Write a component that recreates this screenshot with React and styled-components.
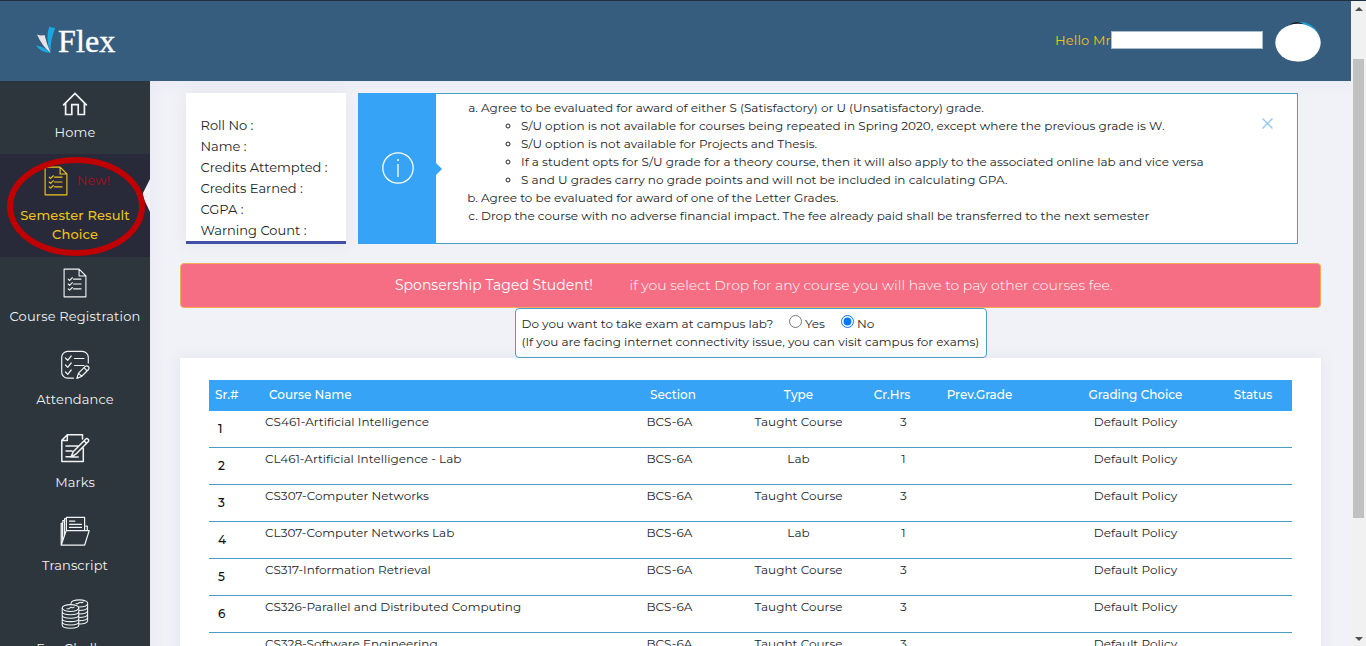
import React from "react";
import styled, { createGlobalStyle } from "styled-components";

const Global = createGlobalStyle`
  * { box-sizing: border-box; }
  html, body { margin: 0; height: 646px; overflow: hidden; }
  body { font-family: Montserrat, Inter, "Liberation Sans", sans-serif; color: #212529; }
`;

const T = styled.span`
  letter-spacing: ${(p) => (p.$ls ? `${p.$ls}px` : "inherit")};
  white-space: nowrap;
`;

const Page = styled.div`
  display: flex;
  width: 1366px;
  height: 646px;
  overflow: hidden;
  border-top: 1px solid #1f2f3f;
  background: #f0f2f7;
`;
const Shell = styled.div`
  width: 1351px;
  display: flex;
  flex-direction: column;
`;
const Header = styled.header`
  height: 80px;
  flex: none;
  background: #365d7e;
  display: flex;
  align-items: center;
  justify-content: space-between;
  padding: 0 30px 0 35px;
  position: relative;
  z-index: 2;
`;
const Logo = styled.div`
  display: flex;
  align-items: center;
  color: #fff;
  font: 32px/36px "Liberation Serif", serif;
  -webkit-text-stroke: 0.4px #fff;
  margin-top: -1px;
  svg { margin: -2px 3px 0 0; }
`;
const User = styled.div`
  display: flex;
  align-items: center;
  font-size: 13px;
  color: #f2c314;
  > span { margin-top: -2px; }
`;
const NameField = styled.div`
  width: 152px;
  height: 18px;
  margin: -2px 12px 0 0;
  background: #fff;
  border: 1px solid #a9bccb;
`;
const Avatar = styled.div`
  width: 46px;
  height: 40px;
  margin-top: 2px;
`;
const Columns = styled.div`
  flex: 1;
  display: flex;
  min-height: 0;
`;
const Sidebar = styled.nav`
  width: 150px;
  flex: none;
  background: #2c363c;
  overflow: hidden;
  position: relative;
`;
const NavItem = styled.div`
  height: ${(p) => p.$h || 83}px;
  padding-top: ${(p) => p.$pt || 10}px;
  display: flex;
  flex-direction: column;
  align-items: center;
  text-align: center;
  font-size: 13px;
  line-height: 19px;
  font-weight: ${(p) => (p.$active ? 500 : 400)};
  color: ${(p) => (p.$active ? "#eec31c" : "#f1f3f4")};
  background: ${(p) => (p.$active ? "#282939" : "transparent")};
  position: relative;
`;
const IconSlot = styled.div`
  height: ${(p) => p.$h || 40}px;
  display: flex;
  align-items: flex-start;
  padding-left: ${(p) => p.$l || 0}px;
`;
const NewTag = styled.span`
  color: #a3121f;
  font-weight: 400;
  margin: 5px 0 0 9px;
`;
const Notch = styled.svg`
  position: absolute;
  right: 0;
  top: 25px;
`;
const Ring = styled.div`
  position: absolute;
  left: 7px;
  top: 76px;
  width: 138px;
  height: 99px;
  border: 6px solid #c00000;
  border-radius: 50%;
`;
const Main = styled.main`
  flex: 1;
  padding: 12px 30px 0;
  display: flex;
  flex-direction: column;
  box-shadow: inset 8px 8px 16px -6px rgba(110, 90, 200, 0.06);
`;
const TopRow = styled.div`
  display: flex;
  gap: 12px;
  padding-left: 6px;
  height: 151px;
`;
const StudentCard = styled.div`
  width: 160px;
  background: #fff;
  border-bottom: 3px solid #414fa6;
  padding: 22px 0 0 14.5px;
  font-size: 13px;
  line-height: 21px;
  color: #212529;
  box-shadow: 0 1px 15px 1px rgba(69, 65, 78, 0.06);
`;
const Line = styled.div`
  white-space: nowrap;
`;
const Notice = styled.div`
  width: 940px;
  display: flex;
  background: #fff;
  border: 1px solid #4a9fc4;
  border-left: 0;
`;
const NoticeIcon = styled.div`
  width: 78px;
  margin: -1px 0;
  background: #36a3f7;
  display: flex;
  align-items: center;
  justify-content: center;
  position: relative;
  svg { margin: -1px 0 0 1px; }
  &::after {
    content: "";
    position: absolute;
    left: 78px;
    top: 70px;
    border: 6px solid transparent;
    border-left-color: #36a3f7;
    border-right: 0;
  }
`;
const NoticeBody = styled.div`
  flex: 1;
  padding-top: 5px;
  font-size: 12px;
  letter-spacing: 0.012px;
  line-height: 18px;
  ol { margin: 0; padding-left: 45px; }
  ul { margin: 0; padding-left: 40px; }
`;
const Close = styled.div`
  padding: 20px 24px 0 0;
`;
const PinkBar = styled.div`
  height: 45px;
  margin-top: 19px;
  flex: none;
  width: 1141px;
  background: #f66e84;
  border: 1px solid #f3ac58;
  border-radius: 4px;
  padding: 0 0 2px 214px;
  display: flex;
  align-items: center;
`;
const Strong = styled(T)`
  width: 234.5px;
  font-size: 14px;
  color: #fff;
`;
const Soft = styled(T)`
  font-size: 14px;
  font-weight: 300;
  color: #fff;
`;
const Exam = styled.div`
  align-self: flex-start;
  margin-left: 335px;
  width: 472px;
  height: 50px;
  flex: none;
  border: 1px solid #4a9fd0;
  border-radius: 4px;
  background: #fff;
  padding: 6px 0 0 5.5px;
  font-size: 12px;
  letter-spacing: 0.01px;
  line-height: 18px;
`;
const Question = styled.div`
  display: flex;
  height: 18px;
  input { margin: 0 3px 0 0; width: 13px; height: 13px; }
`;
const Option = styled.label`
  display: flex;
  margin-left: ${(p) => p.$gap}px;
`;
const Panel = styled.section`
  width: 1141px;
  flex: 1;
  background: #fff;
  padding: 22px 29px 0;
  box-shadow: 0 1px 15px 1px rgba(90, 80, 160, 0.08);
`;
const grid = `
  display: grid;
  grid-template-columns: 56px 354px 101px 157px 30px 145px 167px 68px;
`;
const HeadRow = styled.div`
  ${grid}
  height: 31px;
  line-height: 30px;
  background: #36a3f7;
  color: #fff;
  font-size: 12px;
  font-weight: 500;
  > * { text-align: center; }
  > :nth-child(-n + 2) { text-align: left; }
`;
const Row = styled.div`
  ${grid}
  height: 37px;
  border-bottom: 1px solid #4a9bc8;
  font-size: 12px;
  letter-spacing: 0.03px;
  line-height: 21px;
  > * { text-align: center; }
  > :nth-child(-n + 2) { text-align: left; }
`;
const Cell = styled.div`
  padding-left: ${(p) => p.$l || 0}px;
  white-space: nowrap;
`;
const Num = styled(Cell)`
  color: #111;
  font-weight: 500;
  padding: 7px 0 0 9px;
`;
const Centered = styled(Cell)`
  display: flex;
  justify-content: center;
`;
const Scroll = styled.div`
  width: 15px;
  background: #f1f1f1;
  display: flex;
  flex-direction: column;
  align-items: center;
  padding: 6px 0 5px;
`;
const Thumb = styled.div`
  width: 11px;
  height: 459px;
  margin: 48px 0 auto;
  background: #c1c1c1;
`;
const Arrow = styled.div`
  border: 4px solid transparent;
  ${(p) => (p.$up ? "border-bottom-color:#505050;border-top:0;" : "border-top-color:#505050;border-bottom:0;")}
`;

const Svg = ({ w = 30, h = 30, sw = 1.2, children, vb }) => (
  <svg width={w} height={h} viewBox={vb || `0 0 ${w} ${h}`} fill="none" stroke="currentColor" strokeWidth={sw} strokeLinejoin="round" strokeLinecap="round">
    {children}
  </svg>
);
const HomeIcon = () => (
  <Svg w={26} h={25} sw={1.7}>
    <path d="M1.6 12.8 13 1.4l11.4 11.400M3.600 11.300v11.200h6.200V12.600h6.400v9.900h6.200V11.300" strokeLinejoin="miter" />
  </Svg>
);
const ListIcon = () => (
  <Svg w={24} h={30} sw={1.15} vb="-.3 -.4 24.600 30.800">
    <path d="M.8.8h15.4l7 7v21.4H.8zM16.2.8v7h7M10.500 11h7.700M10.500 16h7.700M10.500 21h7.700M5 11l1.500 1.400L9.300 9.600M5 16l1.500 1.400 2.800-2.800M5 21l1.500 1.400 2.800-2.800" />
  </Svg>
);
const AttendIcon = () => (
  <Svg>
    <path d="M28.3 13V7.4a6 6 0 0 0-6-6H7.700a6 6 0 0 0-6 6v14.800a6 6 0 0 0 6 6h5.800M14.500 8.500h9.500M14.500 15.500h9.500M5.500 8l2.200 2.300L11.200 6M5.500 15l2.200 2.300 3.500-4.300M5.500 22l2.200 2.300 3.500-4.300M16.800 28.400l1.700-5.200 7-7q1.500-1 2.800.3t.2 3l-7 7zM18.500 23.200l3.200 3.200M24 17.700l3.100 3.100" />
  </Svg>
);
const MarksIcon = () => (
  <Svg sw={1.5}>
    <path d="M22.500 6V1.800H7.300L1.800 7.400v21.100h21.500v-13.500M7.300 1.800V7.400H1.800M6 13h12M6 18h6M6 23.700h5M11 24l2.200-5.300L25.800 6q1.200-.9 2.300.2t.2 2.300L15.800 21.200zM24 7.800l2.600 2.600M12.200 24h6" />
  </Svg>
);
const FolderIcon = () => (
  <Svg sw={1.2}>
    <path d="M1.200 29.200 6.200 14.600h23L24.600 29.200zM1.200 29V7.300h1.300V24M2.800 6.500V4.500h1.600V20M4.600 4V2.500h1.700V15M6.400 14.300V1.300h18.200v13.100M9.500 5.200h5.300M9.500 8.300h12M9.500 11.400h12M26 10.200h1.300v4" />
  </Svg>
);
const CoinsIcon = () => (
  <Svg sw={1.05}>
    <ellipse cx="10.5" cy="9" rx="8.3" ry="3.4" />
    <path d="M2.200 9v17c0 4.300 16.600 4.300 16.600 0V9M2.200 12.500c0 4.300 16.600 4.300 16.600 0M2.200 16c0 4.300 16.600 4.300 16.600 0M2.200 19.400c0 4.300 16.600 4.300 16.600 0M2.200 22.800c0 4.300 16.600 4.300 16.600 0M11 5.400V4c1-4.200 16.600-4.200 16.600 0v17.800c0 2.200-4 3.400-8.400 3.200M19 8c4 0 8.600-1 8.600-3.500M19 11.500c4 0 8.600-1 8.600-3.500M19 15c4 0 8.600-1 8.600-3.500M19 18.400c4 0 8.600-1 8.600-3.500M19 21.800c4 0 8.600-1 8.600-3.500M7 9.600c2 1.500 3-1.800 4.500-1.200s1.700.8 2.700-.4M16 4.500c2 1.500 3-1.800 4.500-1.200s1.700.8 2.700-.4" />
  </Svg>
);

const courses = [
  ["CS461-Artificial Intelligence", "Taught Course", 3],
  ["CL461-Artificial Intelligence - Lab", "Lab", 1],
  ["CS307-Computer Networks", "Taught Course", 3],
  ["CL307-Computer Networks Lab", "Lab", 1],
  ["CS317-Information Retrieval", "Taught Course", 3],
  ["CS326-Parallel and Distributed Computing", "Taught Course", 3],
  ["CS328-Software Engineering", "Taught Course", 3],
];

export default function App() {
  return (
    <Page>
      <Global />
      <Shell>
        <Header>
          <Logo>
            <svg width="20" height="28" viewBox="0 0 20 28">
              <path d="M14.3 0.500Q16.800 1.800 20.500 1.800Q15.500 12 15.500 27Q10 12 14.300 0.500Z" fill="#1ba6e0" />
              <path d="M2 8.500Q5.500 10 9.500 9Q11.500 17 15.500 27Q7 20 2 8.500Z" fill="#e6e3e8" />
              <path d="M1 19.500Q9 20 15.500 27Q5 26 1 19.500Z" fill="#1ba6e0" />
            </svg>
            <T $ls={0.1}>Flex</T>
          </Logo>
          <User>
            <T $ls={0.18}>Hello Mr</T>
            <NameField />
            <Avatar>
              <svg width="46" height="40" viewBox="0 0 46 40">
                <ellipse cx="25.500" cy="19.500" rx="19.500" ry="19.500" fill="#1b9dd0" />
                <ellipse cx="22" cy="20" rx="14" ry="20" fill="#101820" />
                <ellipse cx="23" cy="20.800" rx="22.700" ry="19" fill="#fff" />
              </svg>
            </Avatar>
          </User>
        </Header>
        <Columns>
          <Sidebar>
            <NavItem $h={73} $pt={11}>
              <IconSlot $h={31}><HomeIcon /></IconSlot>
              <T $ls={0.12}>Home</T>
            </NavItem>
            <NavItem $h={103} $pt={12} $active>
              <IconSlot $l={4}>
                <ListIcon />
                <NewTag><T $ls={0.12}>New!</T></NewTag>
              </IconSlot>
              <T $ls={0.12}>Semester Result</T>
              <T $ls={0.1}>Choice</T>
              <Notch width="8" height="34" viewBox="0 0 8 34"><path d="M8 0 1 14Q.5 16 1 18L8 33Z" fill="#f0f2f7" /></Notch>
            </NavItem>
            <NavItem $pt={11}><IconSlot $h={39}><ListIcon /></IconSlot><T $ls={0.16}>Course Registration</T></NavItem>
            <NavItem><IconSlot><AttendIcon /></IconSlot><T $ls={0.12}>Attendance</T></NavItem>
            <NavItem><IconSlot><MarksIcon /></IconSlot><T $ls={0.12}>Marks</T></NavItem>
            <NavItem><IconSlot><FolderIcon /></IconSlot><T $ls={0.12}>Transcript</T></NavItem>
            <NavItem><IconSlot><CoinsIcon /></IconSlot><T $ls={0.12}>Fee Challan</T></NavItem>
            <Ring />
          </Sidebar>
          <Main>
            <TopRow>
              <StudentCard>
                {["Roll No :", "Name :", "Credits Attempted :", "Credits Earned :", "CGPA :", "Warning Count :"].map((t) => (
                  <Line key={t}><T>{t}</T></Line>
                ))}
              </StudentCard>
              <Notice>
                <NoticeIcon>
                  <svg width="34" height="34" viewBox="0 0 34 34" fill="none" stroke="#fff" strokeWidth="1.3">
                    <circle cx="17" cy="17" r="15.200" />
                    <path d="M17 13v13" />
                    <circle cx="17" cy="9" r="1" fill="#fff" stroke="none" />
                  </svg>
                </NoticeIcon>
                <NoticeBody>
                  <ol type="a">
                    <li>
                      <T>Agree to be evaluated for award of either S (Satisfactory) or U (Unsatisfactory) grade.</T>
                      <ul type="circle">
                        <li><T>S/U option is not available for courses being repeated in Spring 2020, except where the previous grade is W.</T></li>
                        <li><T>S/U option is not available for Projects and Thesis.</T></li>
                        <li><T>If a student opts for S/U grade for a theory course, then it will also apply to the associated online lab and vice versa</T></li>
                        <li><T>S and U grades carry no grade points and will not be included in calculating GPA.</T></li>
                      </ul>
                    </li>
                    <li><T>Agree to be evaluated for award of one of the Letter Grades.</T></li>
                    <li><T>Drop the course with no adverse financial impact. The fee already paid shall be transferred to the next semester</T></li>
                  </ol>
                </NoticeBody>
                <Close>
                  <svg width="11" height="11" viewBox="0 0 11 11" stroke="#93c9f3" strokeWidth="1.4"><path d="M.5.5l10 10M10.500.5l-10 10" /></svg>
                </Close>
              </Notice>
            </TopRow>
            <PinkBar>
              <Strong>Sponsership Taged Student!</Strong>
              <Soft>if you select Drop for any course you will have to pay other courses fee.</Soft>
            </PinkBar>
            <Exam>
              <Question>
                <T>Do you want to take exam at campus lab?</T>
                <Option $gap={15.5}><input type="radio" name="lab" /><T>Yes</T></Option>
                <Option $gap={16}><input type="radio" name="lab" defaultChecked /><T>No</T></Option>
              </Question>
              <T>(If you are facing internet connectivity issue, you can visit campus for exams)</T>
            </Exam>
            <Panel>
              <HeadRow>
                <Cell $l={6}>Sr.#</Cell>
                <Cell $l={4}>Course Name</Cell>
                <Cell $l={7}>Section</Cell>
                <Cell>Type</Cell>
                <Centered>Cr.Hrs</Centered>
                <Cell>Prev.Grade</Cell>
                <Cell>Grading Choice</Cell>
                <Cell>Status</Cell>
              </HeadRow>
              {courses.map(([name, type, hrs], i) => (
                <Row key={name}>
                  <Num>{i + 1}</Num>
                  <Cell>{name}</Cell>
                  <Cell>BCS-6A</Cell>
                  <Cell>{type}</Cell>
                  <Cell $l={23}>{hrs}</Cell>
                  <Cell />
                  <Cell>Default Policy</Cell>
                  <Cell />
                </Row>
              ))}
            </Panel>
          </Main>
        </Columns>
      </Shell>
      <Scroll>
        <Arrow $up />
        <Thumb />
        <Arrow />
      </Scroll>
    </Page>
  );
}
